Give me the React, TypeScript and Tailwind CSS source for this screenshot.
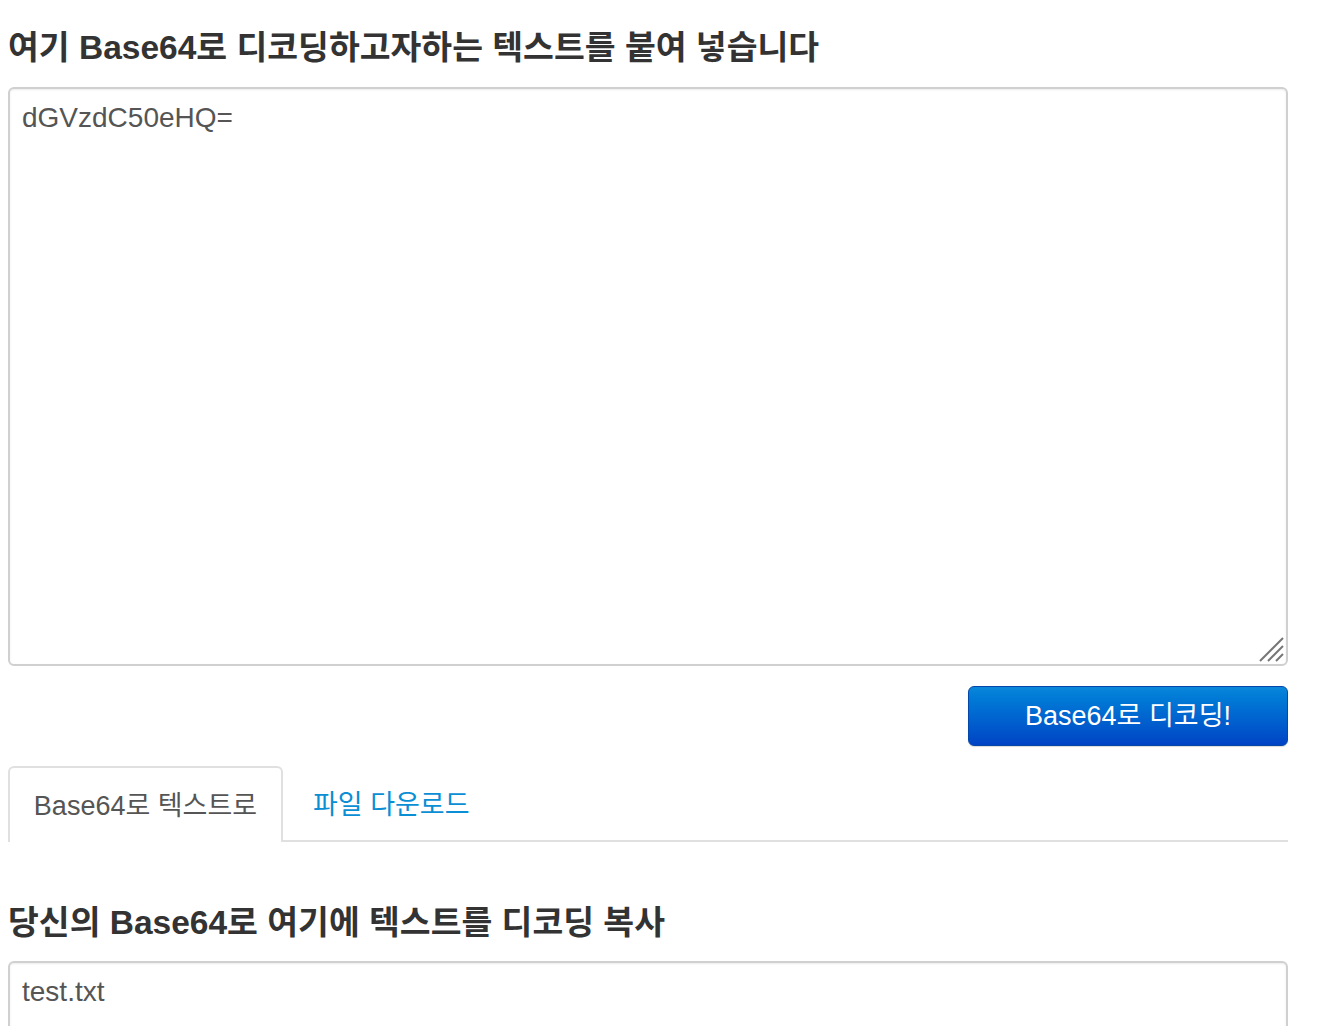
import React from "react";

const font = "font-['Liberation_Sans','Noto_Sans_CJK_KR',sans-serif]";

export default function App() {
  return (
    <div className={`${font} bg-white min-h-[1026px] px-2 pt-[28px] text-[#333]`}>
      <div className="w-[1280px]">
        <h2 className="text-[33.5px] font-bold leading-[40px]">
          여기 Base64로 디코딩하고자하는 텍스트를 붙여 넣습니다
        </h2>
        <div className="relative mt-[19px]">
          <textarea
            defaultValue="dGVzdC50eHQ="
            className={`${font} block w-full h-[579px] rounded-[6px] border-2 border-[#d0d0d0] px-3 py-[12px] text-[28px] leading-[34px] text-[#555] outline-none resize-none shadow-[inset_0_1px_2px_rgba(0,0,0,0.08)]`}
          />
          <svg
            className="absolute right-[4px] bottom-[4px] pointer-events-none"
            width="26"
            height="26"
            viewBox="0 0 26 26"
          >
            <path d="M2 25 L25 2 M10 25 L25 10 M18 25 L25 18" stroke="#777" strokeWidth="2" />
          </svg>
        </div>
        <div className="flex justify-end mt-[20px]">
          <button className="w-[320px] h-[60px] rounded-[6px] border border-[#0447a8] bg-gradient-to-b from-[#0a86da] to-[#0043c5] text-white text-[27px] leading-none shadow-[0_1px_1px_rgba(0,0,0,0.15)]">
            Base64로 디코딩!
          </button>
        </div>
        <div className="mt-[20px] flex items-end border-b-2 border-[#e0e0e0] h-[76px]">
          <div className="w-[275px] h-[76px] -mb-[2px] pt-[3px] rounded-t-[6px] border-2 border-b-0 border-[#e0e0e0] bg-white flex items-center justify-center text-[27px] text-[#555]">
            Base64로 텍스트로
          </div>
          <div className="h-[74px] pt-[5px] flex items-center pl-[30px] text-[27px] text-[#0a8ed4]">
            파일 다운로드
          </div>
        </div>
        <h2 className="mt-[61px] text-[33.5px] font-bold leading-[40px]">
          당신의 Base64로 여기에 텍스트를 디코딩 복사
        </h2>
        <textarea
          defaultValue="test.txt"
          className={`${font} mt-[18px] block w-full h-[200px] rounded-[6px] border-2 border-[#d0d0d0] px-3 py-[12px] text-[28px] leading-[34px] text-[#555] outline-none resize-none shadow-[inset_0_1px_2px_rgba(0,0,0,0.08)]`}
        />
      </div>
    </div>
  );
}
